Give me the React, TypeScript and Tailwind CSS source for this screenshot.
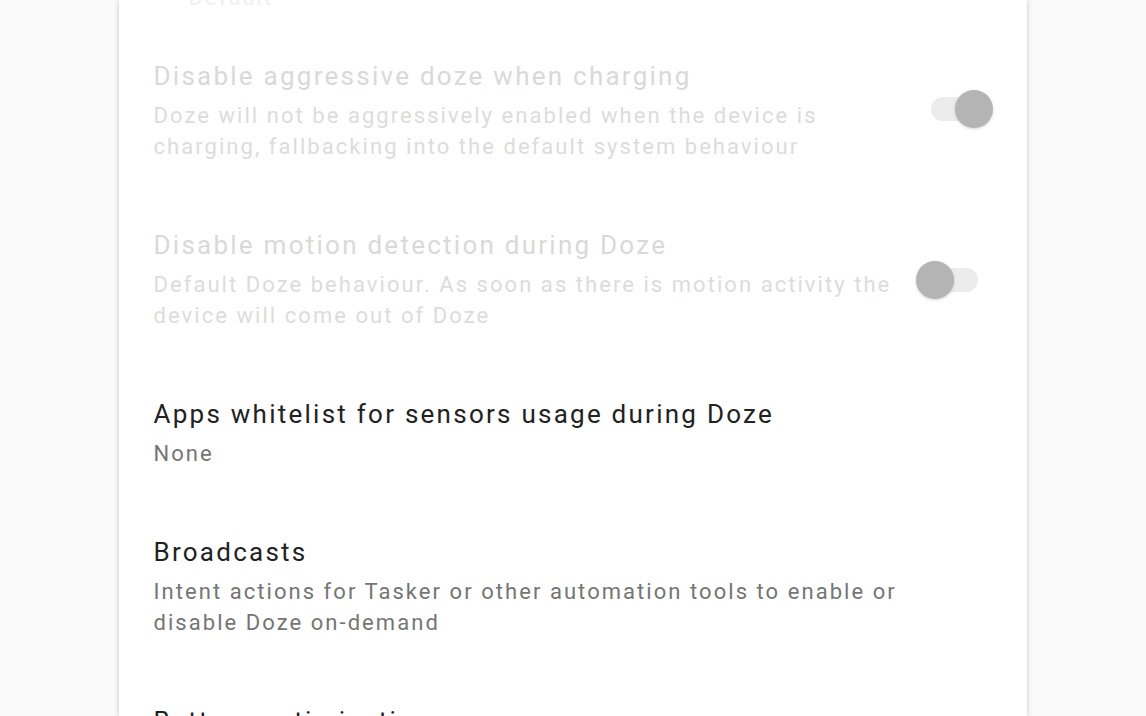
import React from 'react';

type Pref = {
  title: string;
  lines: string[];
  disabled?: boolean;
  toggle?: 'on' | 'off';
  toggleMargin?: string;
};

const prefs: Pref[] = [
  {
    title: 'Disable aggressive doze when charging',
    lines: [
      'Doze will not be aggressively enabled when the device is',
      'charging, fallbacking into the default system behaviour',
    ],
    disabled: true,
    toggle: 'on',
    toggleMargin: 'mr-[34px] mb-[3px]',
  },
  {
    title: 'Disable motion detection during Doze',
    lines: [
      'Default Doze behaviour. As soon as there is motion activity the',
      'device will come out of Doze',
    ],
    disabled: true,
    toggle: 'off',
    toggleMargin: 'mr-[49px]',
  },
  {
    title: 'Apps whitelist for sensors usage during Doze',
    lines: ['None'],
  },
  {
    title: 'Broadcasts',
    lines: [
      'Intent actions for Tasker or other automation tools to enable or',
      'disable Doze on-demand',
    ],
  },
  {
    title: 'Battery optimization',
    lines: ['Manage battery optimization for apps'],
  },
];

function Toggle({ on }: { on: boolean }) {
  return (
    <div className="relative w-[62px] h-[38px] shrink-0">
      <div
        className={
          on
            ? 'absolute left-0 top-[7px] w-[52px] h-[24px] rounded-full bg-[#ececec]'
            : 'absolute right-0 top-[7px] w-[52px] h-[24px] rounded-full bg-[#ececec]'
        }
      />
      <div
        className={
          on
            ? 'absolute right-0 top-0 w-[38px] h-[38px] rounded-full bg-[#b4b4b4] shadow-[0_1px_3px_rgba(0,0,0,0.18)]'
            : 'absolute left-0 top-0 w-[38px] h-[38px] rounded-full bg-[#b4b4b4] shadow-[0_1px_3px_rgba(0,0,0,0.18)]'
        }
      />
    </div>
  );
}

function PrefRow({ pref }: { pref: Pref }) {
  const titleColor = pref.disabled ? 'text-[#d9d9d9]' : 'text-[#222222]';
  const bodyColor = pref.disabled ? 'text-[#dcdcdc]' : 'text-[#757575]';

  return (
    <div className="flex items-center pt-[34px] pb-[32px] pl-[35px]">
      <div className="flex-1 min-w-0">
        <div
          className={`text-[26px] leading-[34px] tracking-[2.25px] whitespace-nowrap ${titleColor}`}
        >
          {pref.title}
        </div>
        <div
          className={`mt-[7px] text-[22px] leading-[31px] tracking-[2.05px] ${bodyColor}`}
        >
          {pref.lines.map((line) => (
            <div key={line} className="whitespace-nowrap">
              {line}
            </div>
          ))}
        </div>
      </div>
      {pref.toggle && (
        <div className={pref.toggleMargin}>
          <Toggle on={pref.toggle === 'on'} />
        </div>
      )}
    </div>
  );
}

export default function App() {
  return (
    <div
      className="h-[716px] w-[1146px] overflow-hidden bg-[#fafafa] flex justify-center"
      style={{ fontFamily: 'Roboto, "Noto Sans", sans-serif' }}
    >
      <div className="w-[908px] ml-[-1px] bg-white shadow-[0_0_5px_rgba(0,0,0,0.22)] pt-[28px]">
        <div className="mt-[-46px] mb-[12px] pl-[70px] text-[22px] leading-[31px] tracking-[2.05px] text-[#f0f0f0] whitespace-nowrap">
          Default
        </div>
        {prefs.map((p) => (
          <PrefRow key={p.title} pref={p} />
        ))}
      </div>
    </div>
  );
}
